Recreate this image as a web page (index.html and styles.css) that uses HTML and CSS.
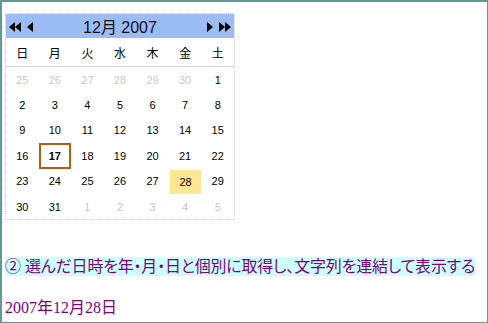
FILE: index.html
```html
<!DOCTYPE html>
<html>
    <head lang="ja">
        <meta charset="UTF-8">
        <title>カレンダー</title>
        <link rel="stylesheet" href="styles.css">
    </head>
    <body>
        <div id="page">
            <div id="calendar">
                <div class="head">
                    <span class="nav">
                        <svg width="12" height="10" viewBox="0 0 12 10"><path d="M6 0v10L0 5zM12 0v10L6 5z"/></svg>
                        <svg width="6" height="10" viewBox="0 0 6 10"><path d="M6 0v10L0 5z"/></svg>
                    </span>
                    <span class="title">12月 2007</span>
                    <span class="nav">
                        <svg width="6" height="10" viewBox="0 0 6 10"><path d="M0 0v10L6 5z"/></svg>
                        <svg width="12" height="10" viewBox="0 0 12 10"><path d="M0 0v10L6 5zM6 0v10L12 5z"/></svg>
                    </span>
                </div>
                <ul class="week">
                    <li>日</li><li>月</li><li>火</li><li>水</li><li>木</li><li>金</li><li>土</li>
                </ul>
                <ul class="days">
                    <li class="other">25</li><li class="other">26</li><li class="other">27</li><li class="other">28</li><li class="other">29</li><li class="other">30</li><li>1</li>
                    <li>2</li><li>3</li><li>4</li><li>5</li><li>6</li><li>7</li><li>8</li>
                    <li>9</li><li>10</li><li>11</li><li>12</li><li>13</li><li>14</li><li>15</li>
                    <li>16</li><li class="today">17</li><li>18</li><li>19</li><li>20</li><li>21</li><li>22</li>
                    <li>23</li><li>24</li><li>25</li><li>26</li><li>27</li><li class="selected">28</li><li>29</li>
                    <li>30</li><li>31</li><li class="other">1</li><li class="other">2</li><li class="other">3</li><li class="other">4</li><li class="other">5</li>
                </ul>
            </div>
            <p class="msg"><span>② 選んだ日時を年・月・日と個別に取得し、文字列を連結して表示する</span></p>
            <p class="result">2007年12月28日</p>
        </div>
    </body>
</html>
```
FILE: styles.css
```css
*{
    margin:0;
    padding:0;
    box-sizing:border-box;
}
ul,ol{
    list-style:none;
}
html,body{
    height:100%;
}
#page{
    height:100%;
    border-style:solid;
    border-color:#5f9a98;
    border-width:2px 1px 1px 2px;
    padding:11px 3px 0 3px;
    font-family:"Liberation Sans","Noto Sans CJK JP",sans-serif;
}
#calendar{
    width:230px;
    border:1px dotted #cfcfcf;
    background-color:#fff;
}
#calendar .head{
    height:24px;
    background-color:#9cbcf6;
    display:flex;
    align-items:center;
    justify-content:space-between;
    padding:0 3px 0 3px;
}
#calendar .head .nav{
    display:flex;
    gap:6px;
    padding-top:2px;
}
#calendar .head .title{
    font-size:16px;
    color:#111;
}
#calendar .week{
    display:grid;
    grid-template-columns:repeat(7,1fr);
    height:29px;
    border-bottom:1px solid #d8d8d8;
    align-items:center;
    text-align:center;
    font-size:12px;
    font-family:"Noto Sans CJK JP",sans-serif;
}
#calendar .days{
    display:grid;
    grid-template-columns:repeat(7,1fr);
    grid-auto-rows:25.4px;
    font-size:11px;
    color:#000;
}
#calendar .days li{
    display:flex;
    align-items:center;
    justify-content:center;
}
#calendar .days li.other{
    color:#c8c8c8;
}
#calendar .days li.today{
    border:2px solid #b85c10;
    font-weight:bold;
}
#calendar .days li.selected{
    background-color:#ffe692;
    margin:1px 0 0 1px;
}
.msg{
    margin-top:37px;
    font-size:16px;
    color:#800080;
    line-height:20px;
    white-space:nowrap;
}
.msg span{
    background-color:#ccffff;
    padding:1px 0;
    font-feature-settings:"palt";
    letter-spacing:-0.2px;
}
.result{
    margin-top:21px;
    font-size:16px;
    color:#800080;
    line-height:20px;
    font-family:"Liberation Serif","Noto Sans CJK JP",serif;
}
```
